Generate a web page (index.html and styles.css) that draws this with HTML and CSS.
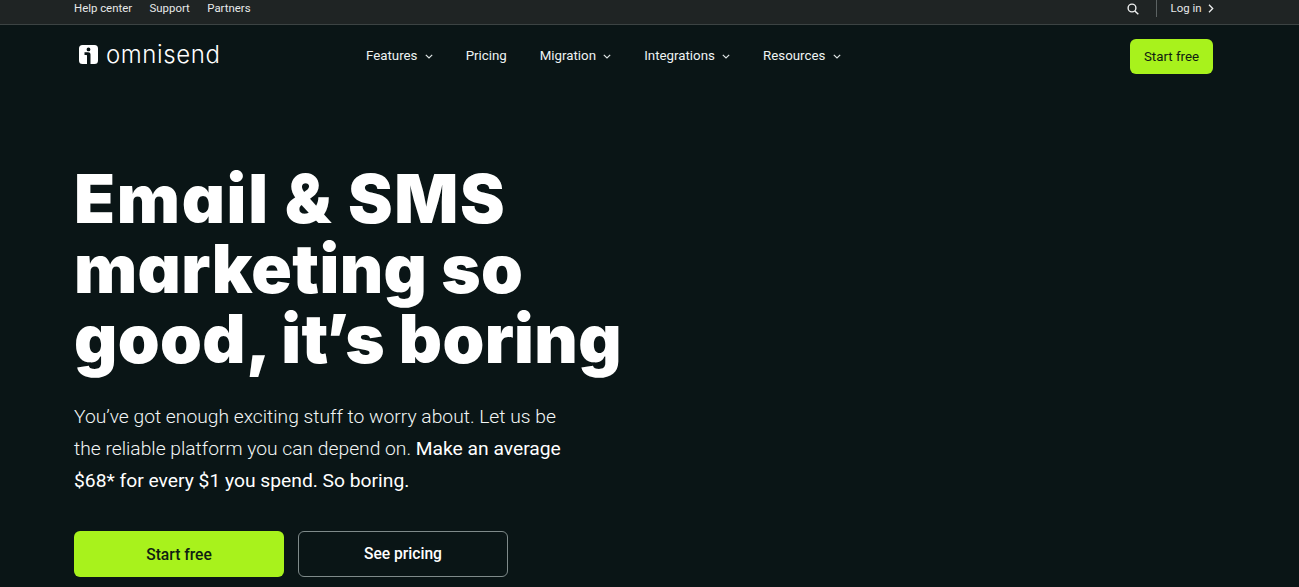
FILE: index.html
```html
<!DOCTYPE html>
<html lang="en">
<head>
<meta charset="utf-8">
<title>Omnisend</title>
<link rel="stylesheet" href="styles.css">
</head>
<body>
<div class="topbar">
  <div class="toplinks"><a>Help center</a><a>Support</a><a>Partners</a></div>
  <div class="topright">
    <svg class="search" width="12" height="12" viewBox="0 0 12 12" fill="none" stroke="#eef0f0" stroke-width="1.4"><circle cx="5" cy="5" r="3.9"/><path d="M7.9 7.9 11.3 11.3"/></svg>
    <span class="divider"></span>
    <a class="login">Log in</a>
    <svg width="6" height="9" viewBox="0 0 6 9" fill="none" stroke="#eef0f0" stroke-width="1.3"><path d="M1 .8 4.7 4.5 1 8.2"/></svg>
  </div>
</div>
<header class="nav">
  <a class="logo">
    <svg width="19" height="19" viewBox="0 0 19 19"><path fill="#fff" fill-rule="evenodd" d="M3.5 0h12A3.5 3.5 0 0 1 19 3.5v12a3.5 3.5 0 0 1-3.5 3.5H11.500V9.500C11.500 8 10.500 7.300 9 7.300H5.500V10H7.300C7.900 10 8 10.400 8 11V19H3.500A3.500 3.500 0 0 1 0 15.500V3.500A3.500 3.500 0 0 1 3.500 0ZM9.500 2.500A1.900 1.900 0 1 0 9.500 6.300A1.900 1.900 0 0 0 9.500 2.500Z"/></svg>
    <span>omnisend</span>
  </a>
  <nav class="menu">
    <a>Features <svg class="chev" width="8" height="5" viewBox="0 0 8 5" fill="none" stroke="#dfe5e5" stroke-width="1.200"><path d="M.8.8 4 4 7.200.8"/></svg></a>
    <a>Pricing</a>
    <a>Migration <svg class="chev" width="8" height="5" viewBox="0 0 8 5" fill="none" stroke="#dfe5e5" stroke-width="1.200"><path d="M.8.8 4 4 7.200.8"/></svg></a>
    <a>Integrations <svg class="chev" width="8" height="5" viewBox="0 0 8 5" fill="none" stroke="#dfe5e5" stroke-width="1.200"><path d="M.8.8 4 4 7.200.8"/></svg></a>
    <a>Resources <svg class="chev" width="8" height="5" viewBox="0 0 8 5" fill="none" stroke="#dfe5e5" stroke-width="1.200"><path d="M.8.8 4 4 7.200.8"/></svg></a>
  </nav>
  <a class="navcta">Start free</a>
</header>
<main class="hero">
  <h1><span class="line-one">Email &amp; SMS</span><br><span class="line-two">marketing so</span><br>good, i<span class="kern">t</span>’s boring</h1>
  <p class="lead">You’ve got enough exciting stuff to worry about. Let us be the reliable platform you can depend on. <span class="strong">Make an average $68* for every $1 you spend. So boring.</span></p>
  <div class="actions">
    <a class="btn primary">Start free</a>
    <a class="btn outline">See pricing</a>
  </div>
</main>
</body>
</html>
```
FILE: styles.css
```css
* { box-sizing: border-box; }
html, body { margin: 0; height: 587px; overflow: hidden; }
body { background: #0a1516; color: #fff; font-family: Roboto, "Liberation Sans", sans-serif; }
.topbar { height: 25px; background: #1f2424; border-bottom: 1px solid #3c4343; padding: 0 85px 8px 74px; display: flex; justify-content: space-between; align-items: center; font-size: 11.4px; color: #e6e9e9; }
.toplinks { display: flex; gap: 17.500px; }
.topright { display: flex; align-items: center; }
.search { margin-top: 1px; }
.divider { width: 1px; height: 17px; background: #5b6262; margin: 0 13.500px 0 17px; }
.login { margin-right: 6.500px; }
.nav { height: 62px; padding: 0 86px 0 79px; display: flex; align-items: center; }
.logo { display: flex; align-items: center; gap: 8px; width: 287px; font-family: Inter, sans-serif; font-size: 24px; font-weight: 300; letter-spacing: .6px; }
.logo span { margin-top: -3px; }
.logo svg { margin-top: -4px; }
.menu { display: flex; gap: 32.900px; font-size: 13.300px; color: #eef3f3; flex: 1; margin-top: -1px; }
.chev { margin-left: 4px; vertical-align: 1px; }
.navcta { width: 83px; height: 35px; background: #a8f21c; color: #0f2012; border-radius: 6px; font-size: 13.300px; display: flex; align-items: center; justify-content: center; }
.hero { padding: 77px 0 0 74px; }
h1 { margin: 0; font-family: Inter, sans-serif; font-feature-settings: "cv11" 1; font-weight: 900; font-size: 67px; line-height: 70px; letter-spacing: .4px; }
.line-one { letter-spacing: 1.700px; }
.line-two { letter-spacing: .400px; }
.kern { letter-spacing: -3px; }
.lead { margin: 27px 0 0; width: 500px; font-size: 19.250px; line-height: 32px; font-weight: 300; color: #f2f5f5; }
.strong { font-weight: 400; color: #fff; }
.actions { display: flex; gap: 14px; margin-top: 34px; }
.btn { width: 210px; height: 46px; border-radius: 6px; display: flex; align-items: center; justify-content: center; font-size: 15.600px; font-weight: 500; padding-top: 2px; }
.primary { background: #a8f21c; color: #0f2012; }
.outline { border: 1px solid #7f8a8a; color: #fff; padding-top: 0; }
```
